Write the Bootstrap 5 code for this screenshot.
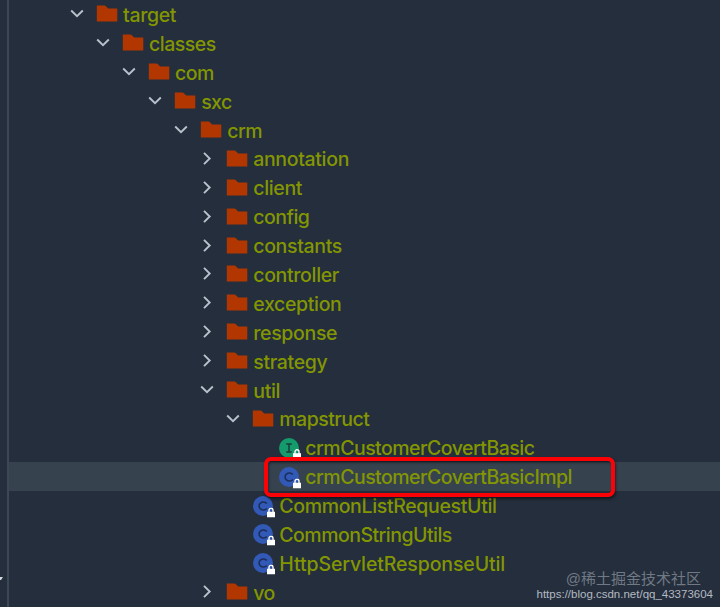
<!doctype html>
<html lang="en">
<head>
    <meta charset="utf-8">
    <meta name="viewport" content="width=device-width, initial-scale=1">
    <title>Project</title>
    <link href="https://cdn.jsdelivr.net/npm/bootstrap@5.3.3/dist/css/bootstrap.min.css" rel="stylesheet">
    <style>
        body {
            background-color: #242e3c;
            font-family: Inter, "Liberation Sans", sans-serif;
        }
        .gutter {
            width: 9px;
            border-right: 2px solid #3c4856;
        }
        .tree {
            min-width: 0;
            font-size: 19.5px;
            font-weight: 500;
            letter-spacing: -0.34px;
            color: #839602;
        }
        .node {
            height: 28.9px;
            line-height: 28.9px;
            padding-left: calc(60px + var(--level) * 26.05px);
            white-space: nowrap;
        }
        .node.selected {
            background-color: #36434f;
        }
        .title {
            padding-top: 2px;
        }
        .tight {
            letter-spacing: -0.52px;
        }
        .loose {
            letter-spacing: -0.12px;
        }
        .lv0 { --level: 0; }
        .lv1 { --level: 1; }
        .lv2 { --level: 2; }
        .lv3 { --level: 3; }
        .lv4 { --level: 4; }
        .lv5 { --level: 5; }
        .lv6 { --level: 6; }
        .lv7 { --level: 7; }
        .toggle {
            width: 16px;
            height: 16px;
            margin-right: 11px;
            fill: none;
            stroke: #b9c2cc;
            stroke-width: 1.9;
        }
        .kind {
            width: 24px;
            height: 24px;
            margin-right: 3px;
        }
        .outline {
            left: 264px;
            top: 457px;
            width: 351px;
            height: 40px;
            border: 4px solid #fb0306;
            border-radius: 7px;
            box-shadow: 1px 2px 3px rgba(0, 0, 0, 0.5), inset 1px 2px 3px rgba(0, 0, 0, 0.4);
        }
        .credit {
            right: 7px;
            bottom: 6px;
            text-align: right;
            white-space: nowrap;
        }
        .community {
            margin-right: 12px;
            font: 15px/18px "Liberation Sans", "Noto Sans CJK SC", sans-serif;
            color: #717984;
        }
        .address {
            font: 11.5px/13px "Liberation Sans", sans-serif;
            color: #b4bac2;
        }
        .cursor {
            left: 0;
            top: 576px;
            width: 3px;
            height: 4px;
        }
    </style>
</head>
<body class="vh-100 overflow-hidden position-relative">
    <svg class="d-none">
        <symbol id="open" viewBox="0 0 16 16"><path d="M2.2 4.5l5.8 5.7L13.8 4.5"/></symbol>
        <symbol id="closed" viewBox="0 0 16 16"><path d="M5 1.8l5.7 5.7L5 13.2"/></symbol>
        <symbol id="folder" viewBox="0 0 24 24"><path fill="#b23600" d="M.8 3.6h7.6q1 0 1.7.8l2.2 2.2H21.3V19.6H.8z"/></symbol>
        <symbol id="lock" viewBox="0 0 8 10"><path fill="none" stroke="#fff" stroke-width="1.4" d="M2 5V2.8a2 2 0 0 1 4 0V5"/><path fill="#fff" d="M0 4.2h8V10H0z"/></symbol>
        <symbol id="interface" viewBox="0 0 24 24">
            <circle cx="11" cy="12" r="10" fill="#149a6b"/>
            <path fill="none" stroke="#173e3a" stroke-width="1.5" d="M8.2 8h5.6M11 8v8M8.2 16h5.6"/>
            <use href="#lock" x="15" y="13" width="8" height="10"/>
        </symbol>
        <symbol id="class" viewBox="0 0 24 24">
            <circle cx="11" cy="12" r="10" fill="#3159b5"/>
            <path fill="none" stroke="#1c2f5c" stroke-width="1.6" d="M14.8 9.6A4.3 4 0 1 0 14.8 14.4"/>
            <use href="#lock" x="15" y="13.5" width="8" height="10"/>
        </symbol>
    </svg>

    <div class="d-flex h-100">
        <div class="gutter flex-shrink-0"></div>
        <div class="tree flex-grow-1">
            <div class="node lv0 d-flex align-items-center"><svg class="toggle"><use href="#open"/></svg><svg class="kind"><use href="#folder"/></svg><span class="title">target</span></div>
            <div class="node lv1 d-flex align-items-center"><svg class="toggle"><use href="#open"/></svg><svg class="kind"><use href="#folder"/></svg><span class="title tight">classes</span></div>
            <div class="node lv2 d-flex align-items-center"><svg class="toggle"><use href="#open"/></svg><svg class="kind"><use href="#folder"/></svg><span class="title tight">com</span></div>
            <div class="node lv3 d-flex align-items-center"><svg class="toggle"><use href="#open"/></svg><svg class="kind"><use href="#folder"/></svg><span class="title tight">sxc</span></div>
            <div class="node lv4 d-flex align-items-center"><svg class="toggle"><use href="#open"/></svg><svg class="kind"><use href="#folder"/></svg><span class="title tight">crm</span></div>
            <div class="node lv5 d-flex align-items-center"><svg class="toggle"><use href="#closed"/></svg><svg class="kind"><use href="#folder"/></svg><span class="title">annotation</span></div>
            <div class="node lv5 d-flex align-items-center"><svg class="toggle"><use href="#closed"/></svg><svg class="kind"><use href="#folder"/></svg><span class="title">client</span></div>
            <div class="node lv5 d-flex align-items-center"><svg class="toggle"><use href="#closed"/></svg><svg class="kind"><use href="#folder"/></svg><span class="title tight">config</span></div>
            <div class="node lv5 d-flex align-items-center"><svg class="toggle"><use href="#closed"/></svg><svg class="kind"><use href="#folder"/></svg><span class="title">constants</span></div>
            <div class="node lv5 d-flex align-items-center"><svg class="toggle"><use href="#closed"/></svg><svg class="kind"><use href="#folder"/></svg><span class="title">controller</span></div>
            <div class="node lv5 d-flex align-items-center"><svg class="toggle"><use href="#closed"/></svg><svg class="kind"><use href="#folder"/></svg><span class="title">exception</span></div>
            <div class="node lv5 d-flex align-items-center"><svg class="toggle"><use href="#closed"/></svg><svg class="kind"><use href="#folder"/></svg><span class="title">response</span></div>
            <div class="node lv5 d-flex align-items-center"><svg class="toggle"><use href="#closed"/></svg><svg class="kind"><use href="#folder"/></svg><span class="title">strategy</span></div>
            <div class="node lv5 d-flex align-items-center"><svg class="toggle"><use href="#open"/></svg><svg class="kind"><use href="#folder"/></svg><span class="title">util</span></div>
            <div class="node lv6 d-flex align-items-center"><svg class="toggle"><use href="#open"/></svg><svg class="kind"><use href="#folder"/></svg><span class="title tight">mapstruct</span></div>
            <div class="node lv7 d-flex align-items-center"><span class="toggle"></span><svg class="kind"><use href="#interface"/></svg><span class="title tight">crmCustomerCovertBasic</span></div>
            <div class="node lv7 selected d-flex align-items-center"><span class="toggle"></span><svg class="kind"><use href="#class"/></svg><span class="title tight">crmCustomerCovertBasicImpl</span></div>
            <div class="node lv6 d-flex align-items-center"><span class="toggle"></span><svg class="kind"><use href="#class"/></svg><span class="title">CommonListRequestUtil</span></div>
            <div class="node lv6 d-flex align-items-center"><span class="toggle"></span><svg class="kind"><use href="#class"/></svg><span class="title tight">CommonStringUtils</span></div>
            <div class="node lv6 d-flex align-items-center"><span class="toggle"></span><svg class="kind"><use href="#class"/></svg><span class="title loose">HttpServletResponseUtil</span></div>
            <div class="node lv5 d-flex align-items-center"><svg class="toggle"><use href="#closed"/></svg><svg class="kind"><use href="#folder"/></svg><span class="title tight">vo</span></div>
        </div>
    </div>

    <div class="outline position-absolute"></div>
    <svg class="cursor position-absolute" viewBox="0 0 3 4"><path fill="#d5dae0" d="M0 1h3L1 4H0z"/></svg>
    <div class="credit position-absolute">
        <div class="community">@稀土掘金技术社区</div>
        <div class="address">https://blog.csdn.net/qq_43373604</div>
    </div>
</body>
</html>
